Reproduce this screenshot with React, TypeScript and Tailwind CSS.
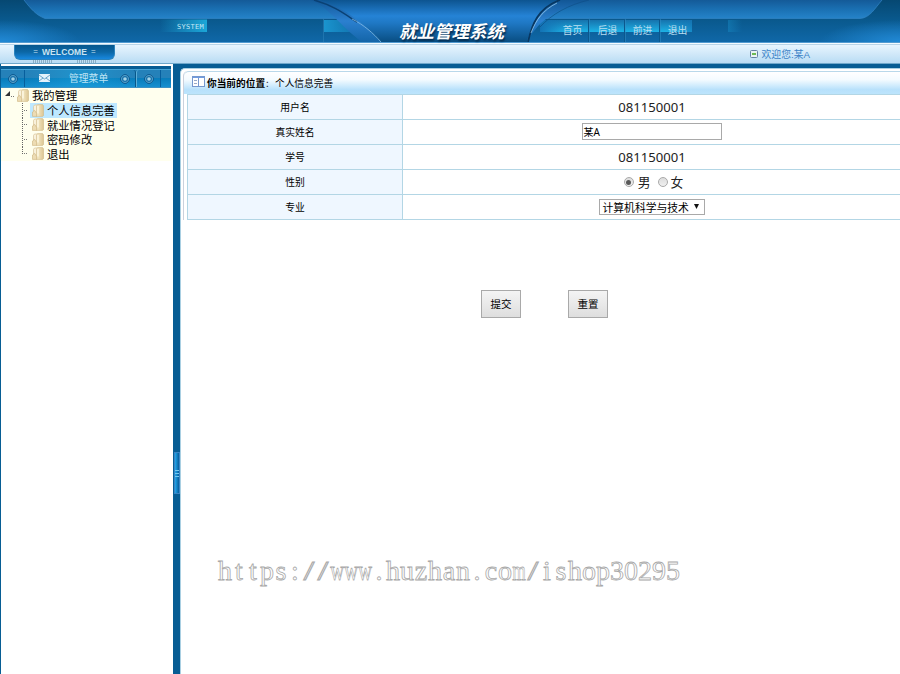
import React from "react";

const nav = ["首页", "后退", "前进", "退出"];
const menu = ["个人信息完善", "就业情况登记", "密码修改", "退出"];
const siteUrl = "https://www.huzhan.com/ishop30295";

function HeaderArt() {
  return (
    <svg className="absolute inset-0" width="900" height="44" viewBox="0 0 900 44">
      <defs>
        <linearGradient id="base" x2="0" y2="1">
          <stop offset="0" stopColor="#064872" /><stop offset=".45" stopColor="#09588c" /><stop offset="1" stopColor="#1068a8" />
        </linearGradient>
        <linearGradient id="panel" x2="0" y2="1">
          <stop offset="0" stopColor="#145a98" /><stop offset=".55" stopColor="#1b72b5" /><stop offset="1" stopColor="#2583c9" />
        </linearGradient>
        <linearGradient id="center" x2="0" y2="1">
          <stop offset="0" stopColor="#0d5490" /><stop offset=".38" stopColor="#2583d6" /><stop offset=".55" stopColor="#1f78c4" /><stop offset="1" stopColor="#094e82" />
        </linearGradient>
        <linearGradient id="wing" x2="0" y2="1">
          <stop offset="0" stopColor="#125796" /><stop offset=".5" stopColor="#2b80d0" /><stop offset="1" stopColor="#1465a8" />
        </linearGradient>
        <linearGradient id="sys"><stop offset="0" stopColor="#1ca7d8" stopOpacity="0" /><stop offset="1" stopColor="#1ca7d8" /></linearGradient>
        <linearGradient id="fade"><stop offset="0" stopColor="#1a94cf" /><stop offset="1" stopColor="#1a94cf" stopOpacity="0" /></linearGradient>
        <linearGradient id="tab" x2="0" y2="1"><stop offset="0" stopColor="#1673ad" /><stop offset="1" stopColor="#1cb2e6" /></linearGradient>
        <linearGradient id="tabStart"><stop offset="0" stopColor="#1372b4" /><stop offset="1" stopColor="#1372b4" stopOpacity="0" /></linearGradient>
        <linearGradient id="tabEnd"><stop offset="0" stopColor="#1372b4" stopOpacity="0" /><stop offset="1" stopColor="#1372b4" stopOpacity=".6" /></linearGradient>
        <radialGradient id="glowL" cx="0" cy="1" r="1"><stop offset="0" stopColor="#2189d5" /><stop offset="1" stopColor="#2189d5" stopOpacity="0" /></radialGradient>
        <radialGradient id="glowR" cx="1" cy="1" r="1"><stop offset="0" stopColor="#2189d5" /><stop offset="1" stopColor="#2189d5" stopOpacity="0" /></radialGradient>
      </defs>
      <rect width="900" height="42" fill="url(#base)" />
      <rect y="20" width="80" height="22" fill="url(#glowL)" />
      <rect x="820" y="20" width="80" height="22" fill="url(#glowR)" />
      <path d="M24 0C31 9 36 15 45 18.5H860C870 18 875 8 882 0Z" fill="url(#panel)" />
      <path d="M24 0C31 9 36 15 45 18.5H860C870 18 875 8 882 0" fill="none" stroke="#3384c5" strokeOpacity=".7" />
      <rect x="160" y="19.5" width="47" height="12.5" fill="url(#sys)" />
      <rect x="324" y="20" width="50" height="12" fill="url(#fade)" />
      <path d="M323.5 19V42" stroke="#2b80b8" strokeOpacity=".6" />
      <rect x="728" y="20" width="14" height="12" fill="url(#fade)" opacity=".4" />
      <rect x="540" y="20" width="152" height="12" fill="url(#tab)" />
      <rect x="540" y="20" width="26" height="12" fill="url(#tabStart)" />
      <rect x="670" y="20" width="22" height="12" fill="url(#tabEnd)" />
      <path d="M588.5 19V42M624.5 19V42M659.5 19V42" stroke="#0b588d" />
      <path d="M589.5 19V42M625.5 19V42M660.5 19V42" stroke="#328fc8" strokeOpacity=".5" />
      <path d="M310 0C328 6 340 26 362 42H382C372 30 350 10 322 0Z" fill="url(#wing)" />
      <path d="M320 0C346 8 366 25 381 42H527C531 26 538 8 560 0Z" fill="url(#center)" />
      <path d="M527 42C536 25 552 8 590 0H560C538 8 531 26 527 42Z" fill="url(#wing)" />
      <path d="M314 0C335 6 346 15 357 22" fill="none" stroke="#0a4174" strokeWidth="1.5" />
      <path d="M352 19C364 25 373 33 381 42" fill="none" stroke="#83bbe4" strokeOpacity=".8" />
      <path d="M560 0C538 8 532 24 528 42" fill="none" stroke="#083761" strokeWidth="1.8" />
      <path d="M557 3C543 10 536 20 531 33" fill="none" stroke="#a0d0f0" strokeOpacity=".8" strokeWidth=".9" />
      <path d="M540 27C552 14 568 5 589 0" fill="none" stroke="#0e4e88" strokeOpacity=".7" />
      <rect y="42" width="900" height="1" fill="#529bd1" />
      <rect y="43" width="900" height="1" fill="#f5fbff" />
    </svg>
  );
}

function Header() {
  return (
    <header className="relative h-[44px] overflow-hidden">
      <HeaderArt />
      <div className="relative flex h-[42px]">
        <span className="ml-[177px] mt-[21px] w-[222px] font-['DejaVu_Sans_Mono',monospace] text-[7px] leading-[12px] tracking-[.3px] text-[#c4e8f5]">SYSTEM</span>
        <h1 className="mt-[20px] w-[155px] whitespace-nowrap font-['Noto_Sans_CJK_SC',sans-serif] text-[17.5px] font-bold italic leading-[22px] text-white [text-shadow:1px_2px_2px_#042a4c]">就业管理系统</h1>
        <nav className="mt-[22px] flex">
          {nav.map((n) => (
            <a key={n} className="w-[35px] text-center font-['Noto_Sans_CJK_SC',sans-serif] text-[9.8px] leading-[16px] text-[#b9def0] first:ml-[1px]">{n}</a>
          ))}
        </nav>
      </div>
    </header>
  );
}

function WelcomeBar() {
  return (
    <div className="flex h-[20px] justify-between border-t border-b border-t-[#b9d5e8] border-b-[#6fa8cb] bg-linear-to-b from-[#e8f5fe] to-[#b9dcf4]">
      <div className="ml-[14px] w-[101px]">
        <div className="flex h-[15px] items-center justify-center gap-[4px] rounded-b-[6px] border-x border-b border-[#2b83bd] bg-linear-to-b from-[#06578e] via-[#0c67a6] to-[#1788df] font-['Liberation_Sans',sans-serif] text-[8.5px] font-bold tracking-[.1px] text-[#c9e4f3]">
          <span className="text-[8px] font-normal">=</span><span>WELCOME</span><span className="text-[8px] font-normal">=</span>
        </div>
        <div className="mx-[19px] flex h-[3px] justify-between">
          <i className="w-[19px] bg-[repeating-linear-gradient(90deg,#8cafc5_0_1px,transparent_1px_2px)]" />
          <i className="w-[19px] bg-[repeating-linear-gradient(90deg,#8cafc5_0_1px,transparent_1px_2px)]" />
        </div>
      </div>
      <div className="mr-[90px] flex items-center gap-[4px] font-['Liberation_Sans','Noto_Sans_CJK_SC',sans-serif] text-[9.8px] leading-[18px] text-[#3c84c8]">
        <svg width="8" height="8" viewBox="0 0 8 8"><rect x=".5" y=".5" width="7" height="7" rx="1" fill="#e9f3f3" stroke="#6482a4" /><path d="M2 4H6" stroke="#40a51e" strokeWidth="1.5" /></svg>
        <span className="mt-[1px]">欢迎您:某A</span>
      </div>
    </div>
  );
}

function Dot() {
  return (
    <svg width="10" height="10" viewBox="0 0 10 10"><circle cx="5" cy="5" r="4.3" fill="#176fa9" stroke="#0b5289" /><circle cx="5" cy="5" r="3.6" fill="none" stroke="#5aa5cc" strokeWidth=".9" /><circle cx="5" cy="5" r="1.8" fill="#a3d3e8" /></svg>
  );
}

function Folder() {
  return (
    <svg className="shrink-0" width="12" height="13" viewBox="0 0 12 13">
      <defs><linearGradient id="folder"><stop stopColor="#f8efcf" /><stop offset="1" stopColor="#dcc592" /></linearGradient></defs>
      <path d="M1.5 8V2.5L2.5 1H5.5V10Z" fill="#f9f1dc" stroke="#d8c49b" strokeWidth=".7" />
      <path d="M4.5 2L5.5 .6H10.6L11.6 2V11.4L10.6 12.4H4.5Z" fill="url(#folder)" stroke="#cfb888" strokeWidth=".6" />
      <path d="M.5 8L2.6 6.3L4.7 9.5V12.4H.5Z" fill="#eddcb4" stroke="#cdb47e" strokeWidth=".6" />
      <path d="M6 2V9.5" stroke="#fffbea" strokeWidth="1.2" />
    </svg>
  );
}

function Sidebar() {
  return (
    <aside className="w-[173px] border-l border-[#075d94] bg-white pt-[2px] pr-[2px]">
      <div className="h-[3px] bg-[#075d94]" />
      <div className="flex h-[19px] items-center border-t border-b border-t-[#45a3d5] border-b-[#3b91c4] bg-[linear-gradient(#2581b9_0_8px,#087bb9_8px,#168fd0)]">
        <span className="flex h-full w-[24px] items-center justify-center border-r border-[#075f9d]"><Dot /></span>
        <span className="flex h-full w-[111px] items-center rounded-tr-[3px] border-r border-[#075789] bg-[linear-gradient(90deg,transparent,#1ba5df80,transparent)]">
          <svg className="-mt-[2px] ml-[14px]" width="11" height="8" viewBox="0 0 11 8"><path d="M0 0H11V8H0Z" fill="#e3f2fb" /><path d="M0 1L5.5 5L11 1M0 7L4 4M11 7L7 4" fill="none" stroke="#5b9cc4" strokeWidth=".9" /></svg>
          <span className="ml-[19px] w-[41px] whitespace-nowrap font-['Noto_Sans_CJK_SC',sans-serif] text-[9.8px] leading-[17px] text-[#bde4f5]">管理菜单</span>
          <span className="ml-[10px]"><Dot /></span>
        </span>
        <span className="flex h-full w-[25px] items-center justify-center rounded-tl-[3px] border-l border-r border-l-[#5cafd8] border-r-[#075f9d]"><Dot /></span>
      </div>
      <div className="h-[73px] bg-[#ffffee] font-['Noto_Sans_CJK_SC',sans-serif] text-[11.3px] leading-[14.5px] text-black">
        <div className="flex h-[15px] items-center pl-[3px]">
          <svg className="-mt-[3px]" width="13" height="8" viewBox="0 0 13 8"><path d="M6 1V6H1Z" fill="#333" /><path d="M7 6.5H10" stroke="#777" strokeDasharray="1 1" /></svg>
          <Folder /><span className="ml-[3px]">我的管理</span>
        </div>
        {menu.map((m, i) => (
          <div key={m} className="flex h-[14.5px] items-center pl-[21px]">
            <span className={`w-px self-start bg-[repeating-linear-gradient(#666_0_1px,transparent_1px_2px)] ${i === 3 ? "h-[7px]" : "h-full"}`} />
            <span className="mr-[2px] h-px w-[5px] bg-[repeating-linear-gradient(90deg,transparent_0_1px,#777_1px_2px)]" />
            <span className={`flex h-full items-center gap-[3px] pl-[2px] pr-[2px] ${i === 0 ? "bg-[#bee8ff]" : ""}`}><Folder /><span>{m}</span></span>
          </div>
        ))}
      </div>
    </aside>
  );
}

function Row({ label, children }: { label: string; children: React.ReactNode }) {
  return (
    <div className="flex h-[25px] border-b border-[#b3d6e5]">
      <div className="flex w-[215px] items-center justify-center border-r border-[#b3d6e5] bg-[#eff7ff] text-[9.8px]">{label}</div>
      <div className="flex flex-1 items-center justify-center">{children}</div>
    </div>
  );
}

function StudentId() {
  return <span className="ml-px pt-[1px] font-['Noto_Sans','Noto_Sans_CJK_SC',sans-serif] text-[13.1px] text-[#222]">081150001</span>;
}

function Radio({ on }: { on?: boolean }) {
  return (
    <span className="flex size-[10px] items-center justify-center rounded-full border border-[#a9a9a9] bg-linear-to-b from-[#ddd] to-[#f0f0f0]">
      {on && <i className="size-[5px] rounded-full bg-[#595959]" />}
    </span>
  );
}

function SiteMark() {
  return (
    <div className="ml-[37px] mt-[235px] flex h-[36px] font-['Liberation_Serif',serif] text-[28px] leading-[36px] text-white opacity-[.99] [-webkit-text-stroke:.8px_#a8a8a8]">
      {siteUrl.split("").map((c, i) => {
        const fit = c === "w" ? "scale-x-[.68]" : c === "m" ? "scale-x-[.62]" : c === "/" ? "scale-x-[1.4]" : "";
        return <span key={i} className="flex w-[14px] justify-center"><span className={fit}>{c}</span></span>;
      })}
    </div>
  );
}

function Main() {
  return (
    <main className="flex-1 overflow-hidden bg-[#075d94] pt-[4px]">
      <div className="h-full rounded-tl-[5px] border-t border-l border-[#a9cfe2] bg-white font-['Noto_Sans_CJK_SC',sans-serif] text-black">
        <div className="ml-[2px] mt-[2px] h-[149px] rounded-tl-[5px] border-l border-[#cbd1dd]">
          <div className="flex h-[23px] items-center rounded-tl-[5px] border-t border-[#b9d8ea] bg-[linear-gradient(#fff,#f4fbff_35%,#b8e1fb_80%,#bce4fc)] pl-[8px] text-[9.7px] leading-[14px]">
            <svg className="-mt-[3px]" width="13" height="11" viewBox="0 0 13 11"><rect x=".5" y=".5" width="12" height="10" fill="#fff" stroke="#7598ce" /><path d="M1 1.5H12" stroke="#6f9be0" /><path d="M6.5 2V10" stroke="#7598ce" /><path d="M2 4.5H5M2 7.5H5" stroke="#9aaac8" /></svg>
            <div className="-mt-[1px] ml-[2px] flex">
              <b className="w-[59px] whitespace-nowrap">你当前的位置</b><span className="w-[9px]">:</span><span>个人信息完善</span>
            </div>
          </div>
          <div className="ml-[3px] border-t border-l border-[#b3d6e5]">
            <Row label="用户名"><StudentId /></Row>
            <Row label="真实姓名"><div className="-mt-px h-[17px] w-[140px] border border-[#a9a9a9] bg-white pl-[1px] font-['Noto_Sans','Noto_Sans_CJK_SC',sans-serif] text-[10px] leading-[16px]">某A</div></Row>
            <Row label="学号"><StudentId /></Row>
            <Row label="性别">
              <div className="ml-[4px] flex items-center text-[12.8px] leading-[16px] text-[#222]"><Radio on /><span className="ml-[4px] mr-[7px]">男</span><Radio /><span className="ml-[3px]">女</span></div>
            </Row>
            <Row label="专业">
              <div className="flex h-[16px] w-[106px] items-center whitespace-nowrap border border-[#a9a9a9] pl-[3px] text-[10.8px] leading-[15px]">
                <span className="w-[91px] pt-[1px]">计算机科学与技术</span>
                <svg className="-mt-[2px]" width="5" height="5" viewBox="0 0 5 5"><path d="M0 0H5L2.5 5Z" fill="#111" /></svg>
              </div>
            </Row>
          </div>
        </div>
        <div className="ml-[300px] mt-[70px] flex gap-[47px] text-[10.5px]">
          <button className="h-[28px] w-[40px] border border-[#a9a9a9] bg-linear-to-b from-[#f4f4f4] to-[#dedede]">提交</button>
          <button className="h-[28px] w-[40px] border border-[#a9a9a9] bg-linear-to-b from-[#f4f4f4] to-[#dedede]">重置</button>
        </div>
        <SiteMark />
      </div>
    </main>
  );
}

export default function App() {
  return (
    <div className="flex h-[674px] w-[900px] flex-col overflow-hidden bg-white">
      <Header />
      <WelcomeBar />
      <div className="flex min-h-0 flex-1">
        <Sidebar />
        <div className="w-[7px] bg-[#075d94] pt-[388px]">
          <div className="ml-[1px] flex h-[42px] w-[6px] flex-col items-center justify-center gap-[2px] border border-[#3b85c4] bg-linear-to-r from-[#24a8ec] to-[#075d9c]">
            <i className="h-px w-[4px] bg-[#75c8ef]" /><i className="h-px w-[4px] bg-[#75c8ef]" /><i className="h-px w-[4px] bg-[#75c8ef]" />
          </div>
        </div>
        <Main />
      </div>
    </div>
  );
}
